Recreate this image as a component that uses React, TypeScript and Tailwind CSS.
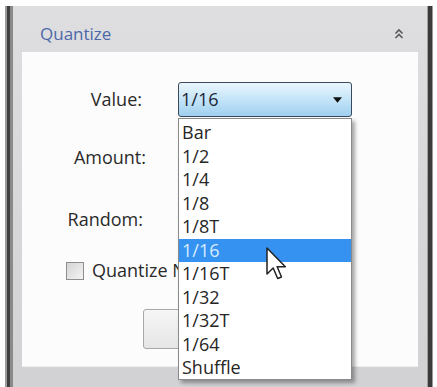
import React from 'react';

const options = ['Bar', '1/2', '1/4', '1/8', '1/8T', '1/16', '1/16T', '1/32', '1/32T', '1/64', 'Shuffle'];

function Chevrons() {
  return (
    <svg width="10" height="12" viewBox="0 0 10 12" className="text-[#5a5a5a]">
      <path d="M1.5 5.5 L5 2 L8.5 5.5" fill="none" stroke="currentColor" strokeWidth="1.6" />
      <path d="M1.5 10 L5 6.5 L8.5 10" fill="none" stroke="currentColor" strokeWidth="1.6" />
    </svg>
  );
}

function Cursor() {
  return (
    <svg width="21" height="33" viewBox="0 0 12.6 19.8" className="absolute left-[266px] top-[247px]">
      <path d="M0.6 0.6 L0.6 16.2 L4.3 12.6 L7 18.9 L9.3 18 L6.7 11.8 L11.6 11.8 Z" fill="#fff" stroke="#222" strokeWidth="0.9" strokeLinejoin="round" />
    </svg>
  );
}

export default function App() {
  return (
    <div className="relative w-[437px] h-[387px] bg-white overflow-hidden text-[#2a2a2a]" style={{ fontFamily: '"Open Sans", "Noto Sans", sans-serif' }}>
      <div className="flex h-full pt-[6px] pl-[5px] pr-[4px]">
        {/* left frame lines */}
        <div className="w-[2px] bg-[#9c9c9c]" />
        <div className="w-[3px] bg-[#3f3f3f]" />
        <div className="w-[3px] bg-[#8a8a8a]" />

        <div className="flex-1 flex flex-col bg-gradient-to-b from-[#dedee0] to-[#d2d2d5]">
          <div className="h-[46px] pt-[10px] flex items-center justify-between pl-[27px] pr-[23px]">
            <span className="text-[17px] text-[#4c68a8]">Quantize</span>
            <Chevrons />
          </div>

          <div className="mx-[9px] h-[315px] bg-[#fcfcfc] border-b border-[#eeeeee]">
            <div className="flex flex-col">
              <div className="mt-[30px] h-[35px] flex items-center">
                <span className="w-[120px] text-right text-[18px]">Value:</span>
                <div className="ml-[36px] w-[174px] h-[35px] rounded-[3px] border border-[#3a4a5c] bg-gradient-to-b from-[#eaf6fd] via-[#c4e4f8] to-[#9fd0ef] flex items-center justify-between pl-[2px] pr-[9px]">
                  <span className="text-[18px] text-[#1b2838]">1/16</span>
                  <svg width="9" height="6" viewBox="0 0 10 6">
                    <path d="M0 0 L10 0 L5 6 Z" fill="#111" />
                  </svg>
                </div>
              </div>

              <div className="mt-[23px] h-[35px] flex items-center">
                <span className="w-[124px] text-right text-[18px]">Amount:</span>
                <input className="ml-[32px] w-[174px] h-[30px] border border-[#ababab]" />
              </div>

              <div className="mt-[27px] h-[35px] flex items-center">
                <span className="w-[121px] text-right text-[18px]">Random:</span>
                <input className="ml-[35px] w-[174px] h-[30px] border border-[#ababab]" />
              </div>

              <div className="mt-[16px] h-[35px] flex items-center pl-[44px] gap-[8px]">
                <span className="w-[18px] h-[18px] shrink-0 border border-[#8e8e8e] bg-gradient-to-br from-[#d4d4d4] to-[#f4f4f4]" />
                <span className="w-[86px] overflow-hidden text-[18px] whitespace-nowrap">Quantize Note Length</span>
              </div>

              <div className="mt-[21px] pl-[121px]">
                <button className="w-[150px] h-[40px] rounded-[3px] border border-[#a8a8a8] bg-gradient-to-b from-[#f6f6f6] to-[#e6e6e6]" />
              </div>
            </div>
          </div>
        </div>

        {/* right frame lines */}
        <div className="w-[1px] bg-[#a0a0a0]" />
        <div className="w-[4px] bg-[#3a3a3a]" />
        <div className="w-[1px] bg-[#9a9a9a]" />
      </div>

      {/* open dropdown list */}
      <div className="absolute left-[178px] top-[118px] w-[174px] h-[262px] bg-white border border-[#8a8a8a] pt-[2px] shadow-[3px_3px_4px_rgba(0,0,0,0.35)]">
        {options.map((o) => (
          <div
            key={o}
            className={`h-[23.5px] flex items-center pl-[3px] text-[18px] ${o === '1/16' ? 'bg-[#3592f0] text-[#d8ecff]' : 'text-[#262626]'}`}
          >
            {o}
          </div>
        ))}
      </div>

      <Cursor />
    </div>
  );
}
